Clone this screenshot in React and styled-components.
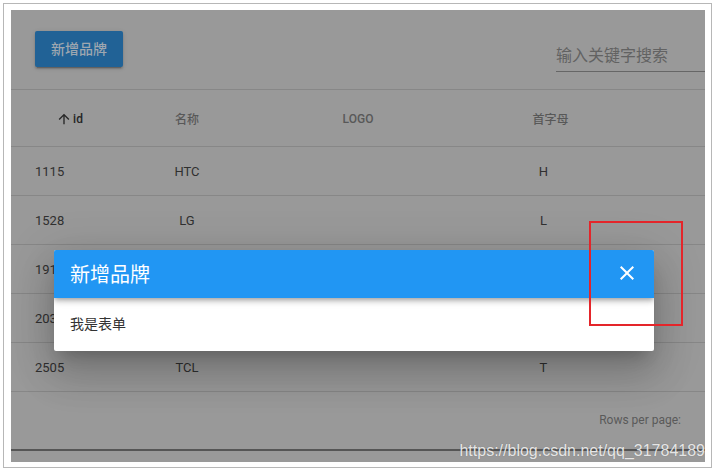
import React from "react";
import styled, { createGlobalStyle } from "styled-components";

const Global = createGlobalStyle`
  html, body { margin: 0; padding: 0; background: #fff; width: 715px; height: 471px; overflow: hidden; }
  * { box-sizing: border-box; }
  body { font-family: Roboto, "Noto Sans CJK SC", sans-serif; }
`;

const Frame = styled.div`
  position: relative;
  margin: 3px 0 0 3px;
  width: 709px;
  height: 465px;
  border: 1px solid #b7b7b7;
  padding: 6px 6px 5px 7px;
  display: flex;
`;

const Screen = styled.div`
  position: relative;
  flex: 1;
  display: flex;
  flex-direction: column;
  background: #999999;
  overflow: hidden;
`;

const Toolbar = styled.div`
  height: 80px;
  display: flex;
  align-items: flex-start;
  justify-content: space-between;
  padding: 21px 0 0 24px;
  border-bottom: 1px solid #878787;
  flex-shrink: 0;
`;

const AddButton = styled.button`
  width: 88px;
  height: 36px;
  border: none;
  border-radius: 2px;
  background: #216296;
  color: #9ea7b0;
  font-family: Roboto, "Noto Sans CJK SC", sans-serif;
  font-size: 14px;
  font-weight: 500;
  padding: 0 0 2px;
  box-shadow: 0 3px 1px -2px rgba(0,0,0,.2), 0 2px 2px 0 rgba(0,0,0,.14), 0 1px 5px 0 rgba(0,0,0,.12);
`;

const Search = styled.div`
  width: 149px;
  height: 26px;
  margin-top: 15px;
  border-bottom: 1px solid #666;
  font-size: 16px;
  line-height: 20px;
  color: #626262;
  white-space: nowrap;
`;

const GridRow = styled.div`
  display: grid;
  grid-template-columns: 117px 118px 224px 147px 1fr;
  align-items: center;
  height: ${(p) => (p.$header ? 57 : 49)}px;
  padding-top: ${(p) => (p.$header ? 1 : 0)}px;
  border-bottom: 1px solid #878787;
  flex-shrink: 0;
  font-size: ${(p) => (p.$header ? 12 : 13)}px;
  font-weight: ${(p) => (p.$header ? 500 : 400)};
  color: ${(p) => (p.$header ? "#585858" : "#303030")};
`;

const Cell = styled.div`
  display: flex;
  align-items: center;
  justify-content: ${(p) => (p.$left ? "flex-start" : "center")};
  padding-left: ${(p) => p.$pl || 0}px;
  color: ${(p) => (p.$active ? "#262626" : "inherit")};
  white-space: nowrap;
`;

const SortIcon = styled.svg`
  width: 16px;
  height: 16px;
  margin-right: 1px;
`;

const Footer = styled.div`
  height: 59px;
  flex-shrink: 0;
  display: flex;
  align-items: center;
  justify-content: flex-end;
  padding: 0 24px 2px 0;
  font-size: 12px;
  color: #5a5a5a;
  border-bottom: 2px solid #555;
`;

const Dialog = styled.div`
  position: absolute;
  left: 43px;
  top: 240px;
  width: 600px;
  border-radius: 2px;
  overflow: hidden;
  background: #fff;
  box-shadow: 0 11px 15px -7px rgba(0,0,0,.2), 0 24px 38px 3px rgba(0,0,0,.14), 0 9px 46px 8px rgba(0,0,0,.12);
  z-index: 5;
`;

const TitleBar = styled.div`
  position: relative;
  z-index: 1;
  height: 48px;
  background: #2196f3;
  display: flex;
  align-items: center;
  justify-content: space-between;
  padding: 0 9px 2px 16px;
  box-shadow: 0 2px 4px -1px rgba(0,0,0,.2), 0 4px 5px 0 rgba(0,0,0,.14), 0 1px 10px 0 rgba(0,0,0,.12);
`;

const Title = styled.div`
  color: #fff;
  font-size: 20px;
  font-weight: 400;
`;

const CloseButton = styled.button`
  width: 36px;
  height: 36px;
  border: none;
  background: transparent;
  padding: 0;
  display: flex;
  align-items: center;
  justify-content: center;
`;

const DialogBody = styled.div`
  height: 53px;
  padding: 0 16px 3px;
  display: flex;
  align-items: center;
  font-size: 14px;
  color: #333;
`;

const RedMark = styled.div`
  position: absolute;
  left: 578px;
  top: 211px;
  width: 94px;
  height: 105px;
  border: 2px solid #e4252a;
  z-index: 10;
`;

const Watermark = styled.div`
  position: absolute;
  right: 0;
  bottom: 3px;
  font-family: "Liberation Sans", Arial, sans-serif;
  font-size: 16px;
  line-height: 16px;
  color: rgba(245,245,245,.9);
  text-shadow: 0 0 1px rgba(0,0,0,.25);
  z-index: 10;
  white-space: nowrap;
`;

const rows = [
  { id: 1115, name: "HTC", letter: "H" },
  { id: 1528, name: "LG", letter: "L" },
  { id: 1912, name: "OPPO", letter: "O" },
  { id: 2032, name: "魅族", letter: "M" },
  { id: 2505, name: "TCL", letter: "T" },
];

export default function App() {
  return (
    <>
      <Global />
      <Frame>
        <Screen>
          <Toolbar>
            <AddButton>新增品牌</AddButton>
            <Search>输入关键字搜索</Search>
          </Toolbar>
          <GridRow $header>
            <Cell $active>
              <SortIcon viewBox="0 0 24 24">
                <path fill="#262626" d="M4 12l1.41 1.41L11 7.83V20h2V7.83l5.58 5.59L20 12l-8-8-8 8z" />
              </SortIcon>
              id
            </Cell>
            <Cell>名称</Cell>
            <Cell>LOGO</Cell>
            <Cell $pl={14}>首字母</Cell>
            <Cell />
          </GridRow>
          {rows.map((r) => (
            <GridRow key={r.id}>
              <Cell $left $pl={24}>{r.id}</Cell>
              <Cell>{r.name}</Cell>
              <Cell />
              <Cell>{r.letter}</Cell>
              <Cell />
            </GridRow>
          ))}
          <Footer>Rows per page:</Footer>
          <Dialog>
            <TitleBar>
              <Title>新增品牌</Title>
              <CloseButton aria-label="close">
                <svg width="24" height="24" viewBox="0 0 24 24">
                  <path fill="#fff" d="M19 6.41L17.59 5 12 10.59 6.41 5 5 6.41 10.59 12 5 17.59 6.41 19 12 13.41 17.59 19 19 17.59 13.41 12z" />
                </svg>
              </CloseButton>
            </TitleBar>
            <DialogBody>我是表单</DialogBody>
          </Dialog>
          <RedMark />
          <Watermark>https://blog.csdn.net/qq_31784189</Watermark>
        </Screen>
      </Frame>
    </>
  );
}
